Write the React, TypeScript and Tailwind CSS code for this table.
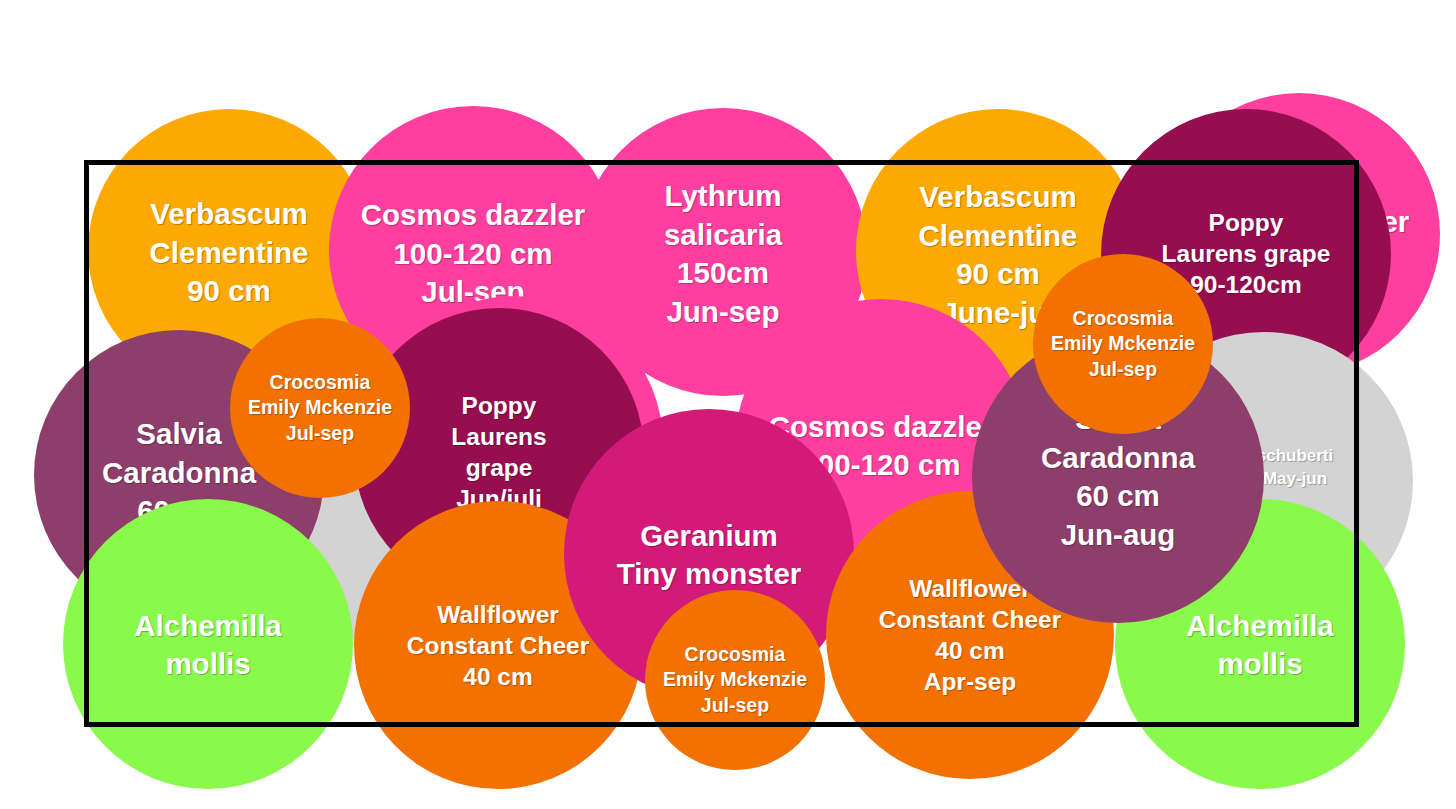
import React from "react";

type Circle = {
  id: string;
  x: number;
  y: number;
  r: number;
  bg: string;
  text: string;
  lines: string[];
  tx?: number;
  ty?: number;
};

const BIG = "text-[29.5px] leading-[38.5px] font-bold";
const MED = "text-[24.5px] leading-[31px] font-bold";
const SMALL = "text-[19.5px] leading-[25.5px] font-bold";
const TINY = "text-[17px] leading-[23px] font-bold";

const PINK = "bg-[#fe3f9f]";
const GOLD = "bg-[#fcaa02]";
const DARK = "bg-[#970e50]";
const MAUVE = "bg-[#8e3e6a]";
const ORANGE = "bg-[#f27100]";
const MAGENTA = "bg-[#d31a79]";
const GREEN = "bg-[#89f94b]";
const GRAY = "bg-[#d3d3d3]";

const croco = ["Crocosmia", "Emily Mckenzie", "Jul-sep"];

const circles: Circle[] = [
  { id: "pinkFar", x: 1299, y: 234, r: 141, bg: PINK, text: BIG, lines: ["Cosmos dazzler"], tx: 1297, ty: 222 },
  { id: "verbL", x: 229, y: 250, r: 141, bg: GOLD, text: BIG, lines: ["Verbascum", "Clementine", "90 cm"], ty: 253 },
  { id: "lythrum", x: 723, y: 252, r: 144, bg: PINK, text: BIG, lines: ["Lythrum", "salicaria", "150cm", "Jun-sep"], ty: 254 },
  { id: "cosmosL", x: 473, y: 250, r: 144, bg: PINK, text: BIG, lines: ["Cosmos dazzler", "100-120 cm", "Jul-sep"], ty: 254 },
  { id: "verbR", x: 998, y: 251, r: 142, bg: GOLD, text: BIG, lines: ["Verbascum", "Clementine", "90 cm", "June-jul"], ty: 255 },
  { id: "poppyR", x: 1246, y: 254, r: 145, bg: DARK, text: MED, lines: ["Poppy", "Laurens grape", "90-120cm"], ty: 253 },
  { id: "grayR", x: 1264, y: 481, r: 149, bg: GRAY, text: TINY, lines: ["schuberti", "May-jun"], tx: 1295, ty: 467 },
  { id: "cosmosMid", x: 881, y: 445, r: 146, bg: PINK, text: BIG, lines: ["Cosmos dazzler", "100-120 cm"], ty: 446 },
  { id: "pinkHidden", x: 515, y: 444, r: 148, bg: PINK, text: BIG, lines: [] },
  { id: "grayL", x: 345, y: 545, r: 95, bg: GRAY, text: TINY, lines: [] },
  { id: "salviaL", x: 179, y: 475, r: 145, bg: MAUVE, text: BIG, lines: ["Salvia", "Caradonna", "60 cm", "Jun-aug"], ty: 492 },
  { id: "poppyMid", x: 499, y: 453, r: 145, bg: DARK, text: MED, lines: ["Poppy", "Laurens", "grape", "Jun/juli"], ty: 452 },
  { id: "wallL", x: 498, y: 645, r: 144, bg: ORANGE, text: MED, lines: ["Wallflower", "Constant Cheer", "40 cm"], ty: 645 },
  { id: "alchL", x: 208, y: 644, r: 145, bg: GREEN, text: BIG, lines: ["Alchemilla", "mollis"], ty: 645 },
  { id: "geranium", x: 709, y: 554, r: 145, bg: MAGENTA, text: BIG, lines: ["Geranium", "Tiny monster"], ty: 555 },
  { id: "wallR", x: 970, y: 635, r: 144, bg: ORANGE, text: MED, lines: ["Wallflower", "Constant Cheer", "40 cm", "Apr-sep"], ty: 635 },
  { id: "alchR", x: 1260, y: 644, r: 145, bg: GREEN, text: BIG, lines: ["Alchemilla", "mollis"], ty: 645 },
  { id: "salviaR", x: 1118, y: 477, r: 146, bg: MAUVE, text: BIG, lines: ["Salvia", "Caradonna", "60 cm", "Jun-aug"], ty: 477 },
  { id: "crocL", x: 320, y: 408, r: 90, bg: ORANGE, text: SMALL, lines: croco, ty: 408 },
  { id: "crocR", x: 1123, y: 344, r: 90, bg: ORANGE, text: SMALL, lines: croco, ty: 344 },
  { id: "crocB", x: 735, y: 680, r: 90, bg: ORANGE, text: SMALL, lines: croco, ty: 680 },
];

function Bubble({ c }: { c: Circle }) {
  const dx = (c.tx ?? c.x) - c.x;
  const dy = (c.ty ?? c.y) - c.y;
  return (
    <div
      className={`absolute rounded-full flex items-center justify-center ${c.bg}`}
      style={{ left: c.x - c.r, top: c.y - c.r, width: c.r * 2, height: c.r * 2 }}
    >
      {c.lines.length > 0 && (
        <div
          className={`flex flex-col items-center text-white whitespace-nowrap text-center [text-shadow:1px_1px_1px_rgba(0,0,0,0.28)] ${c.text}`}
          style={{ transform: `translate(${dx}px, ${dy}px)` }}
        >
          {c.lines.map((l, i) => (
            <span key={i}>{l}</span>
          ))}
        </div>
      )}
    </div>
  );
}

export default function App() {
  return (
    <div className="relative w-[1456px] h-[809px] bg-white overflow-hidden font-['Liberation_Sans',Arial,sans-serif]">
      {circles.map((c) => (
        <Bubble key={c.id} c={c} />
      ))}
      <div className="absolute left-[84px] top-[160px] w-[1275px] h-[567px] border-[5px] border-black" />
    </div>
  );
}
